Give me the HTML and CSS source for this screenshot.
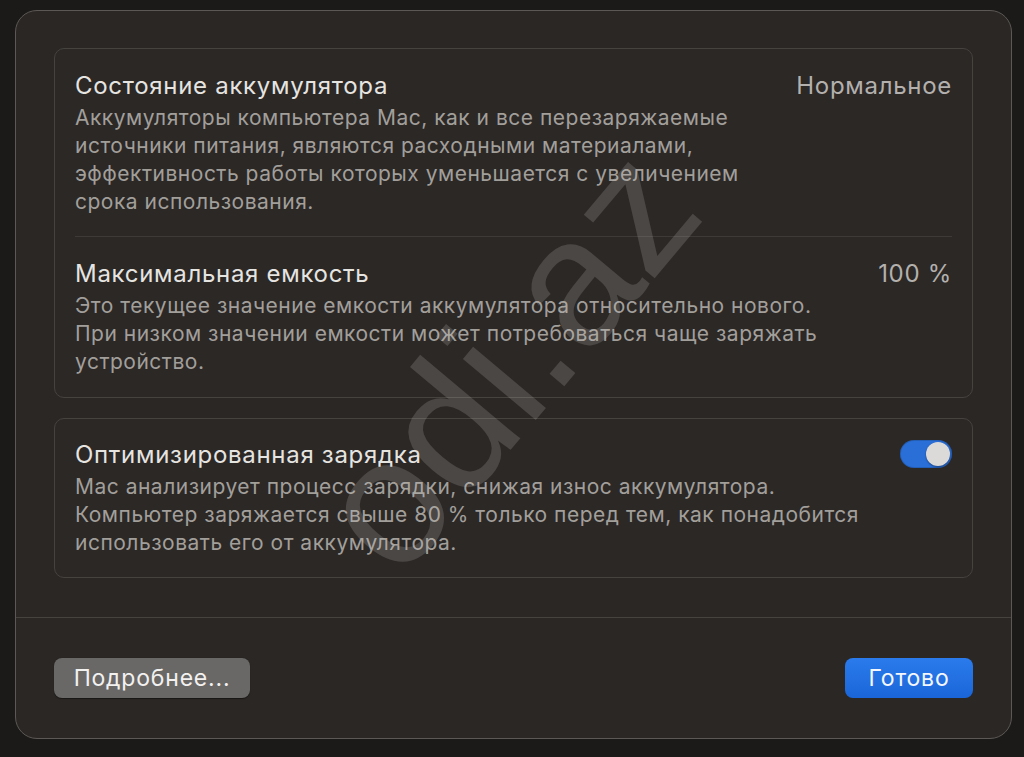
FILE: index.html
```html
<!DOCTYPE html>
<html lang="ru">
<head>
<meta charset="utf-8">
<title>Аккумулятор</title>
<link rel="stylesheet" href="styles.css">
</head>
<body>
<div class="window">
  <div class="content">
    <div class="card">
      <div class="row">
        <div class="row-head">
          <div class="title">Состояние аккумулятора</div>
          <div class="value">Нормальное</div>
        </div>
        <div class="desc">Аккумуляторы компьютера Mac, как и все перезаряжаемые<br>источники питания, являются расходными материалами,<br>эффективность работы которых уменьшается с увеличением<br>срока использования.</div>
      </div>
      <div class="sep"></div>
      <div class="row row-last">
        <div class="row-head">
          <div class="title">Максимальная емкость</div>
          <div class="value">100 %</div>
        </div>
        <div class="desc">Это текущее значение емкости аккумулятора относительно нового.<br>При низком значении емкости может потребоваться чаще заряжать<br>устройство.</div>
      </div>
    </div>
    <div class="card card2">
      <div class="row row-opt">
        <div class="row-head">
          <div class="title">Оптимизированная зарядка</div>
          <div class="toggle"><div class="knob"></div></div>
        </div>
        <div class="desc">Mac анализирует процесс зарядки, снижая износ аккумулятора.<br>Компьютер заряжается свыше 80 % только перед тем, как понадобится<br>использовать его от аккумулятора.</div>
      </div>
    </div>
  </div>
  <div class="footer">
    <button class="btn btn-grey">Подробнее...</button>
    <button class="btn btn-blue">Готово</button>
  </div>
  <div class="watermark">odi.az</div>
</div>
</body>
</html>
```

FILE: styles.css
```css
html, body {
  margin: 0;
  padding: 0;
}
body {
  background: #1b1a19;
  width: 1024px;
  height: 757px;
  overflow: hidden;
  font-family: Inter, "Noto Sans", "DejaVu Sans", sans-serif;
}
.window {
  position: relative;
  margin: 10px 0 0 15px;
  width: 997px;
  height: 729px;
  box-sizing: border-box;
  border: 1px solid #5b5855;
  border-radius: 22px;
  background: #2a2725;
  overflow: hidden;
  display: flex;
  flex-direction: column;
}
.content {
  padding: 37px 38px 39px 38px;
  display: flex;
  flex-direction: column;
  gap: 20px;
  border-bottom: 1px solid #46433f;
}
.card {
  border: 1px solid #46433f;
  border-radius: 10px;
  background: #2b2826;
  display: flex;
  flex-direction: column;
}
.row {
  padding: 22px 20px 20px 20px;
}
.row-last {
  padding-top: 22px;
  padding-bottom: 21px;
}
.row-opt {
  padding-top: 21px;
  padding-bottom: 20px;
}
.row-head {
  display: flex;
  justify-content: space-between;
  align-items: center;
  height: 28px;
}
.title {
  color: #e6e4e1;
  font-size: 24px;
  letter-spacing: 0.7px;
}
.value {
  color: #b3b0ad;
  font-size: 24px;
  letter-spacing: 0.7px;
}
.desc {
  margin-top: 5px;
  color: #a29f9b;
  font-size: 21px;
  line-height: 28px;
  letter-spacing: 0.5px;
}
.sep {
  height: 1px;
  background: #3d3a37;
  margin: 0 20px;
}
.toggle {
  width: 52px;
  height: 28px;
  border-radius: 14px;
  background: #2a6fd8;
  position: relative;
  box-shadow: inset 0 0 0 1px rgba(0,0,0,0.15);
}
.knob {
  position: absolute;
  right: 2px;
  top: 2px;
  width: 24px;
  height: 24px;
  border-radius: 50%;
  background: #dcdad8;
  box-shadow: 0 1px 2px rgba(0,0,0,0.4);
}
.footer {
  display: flex;
  justify-content: space-between;
  align-items: center;
  padding: 40px 38px 0 38px;
}
.btn {
  height: 40px;
  border: none;
  border-radius: 8px;
  font-family: Inter, "Noto Sans", "DejaVu Sans", sans-serif;
  font-size: 23px;
  color: #f2f1f0;
  padding: 0;
  letter-spacing: 0.8px;
}
.btn-grey {
  width: 196px;
  background: #6a6866;
  box-shadow: 0 0.5px 1px rgba(0,0,0,0.4);
}
.btn-blue {
  width: 128px;
  background: linear-gradient(#2b7bed, #1a66d8);
  color: #f4f7ff;
}
.watermark {
  position: absolute;
  left: 250px;
  top: 258px;
  width: 480px;
  height: 180px;
  line-height: 180px;
  text-align: center;
  font-family: "Liberation Sans", Arial, sans-serif;
  font-size: 180px;
  color: rgba(200, 195, 190, 0.2);
  transform: rotate(-50deg);
  transform-origin: center;
  pointer-events: none;
}
```
